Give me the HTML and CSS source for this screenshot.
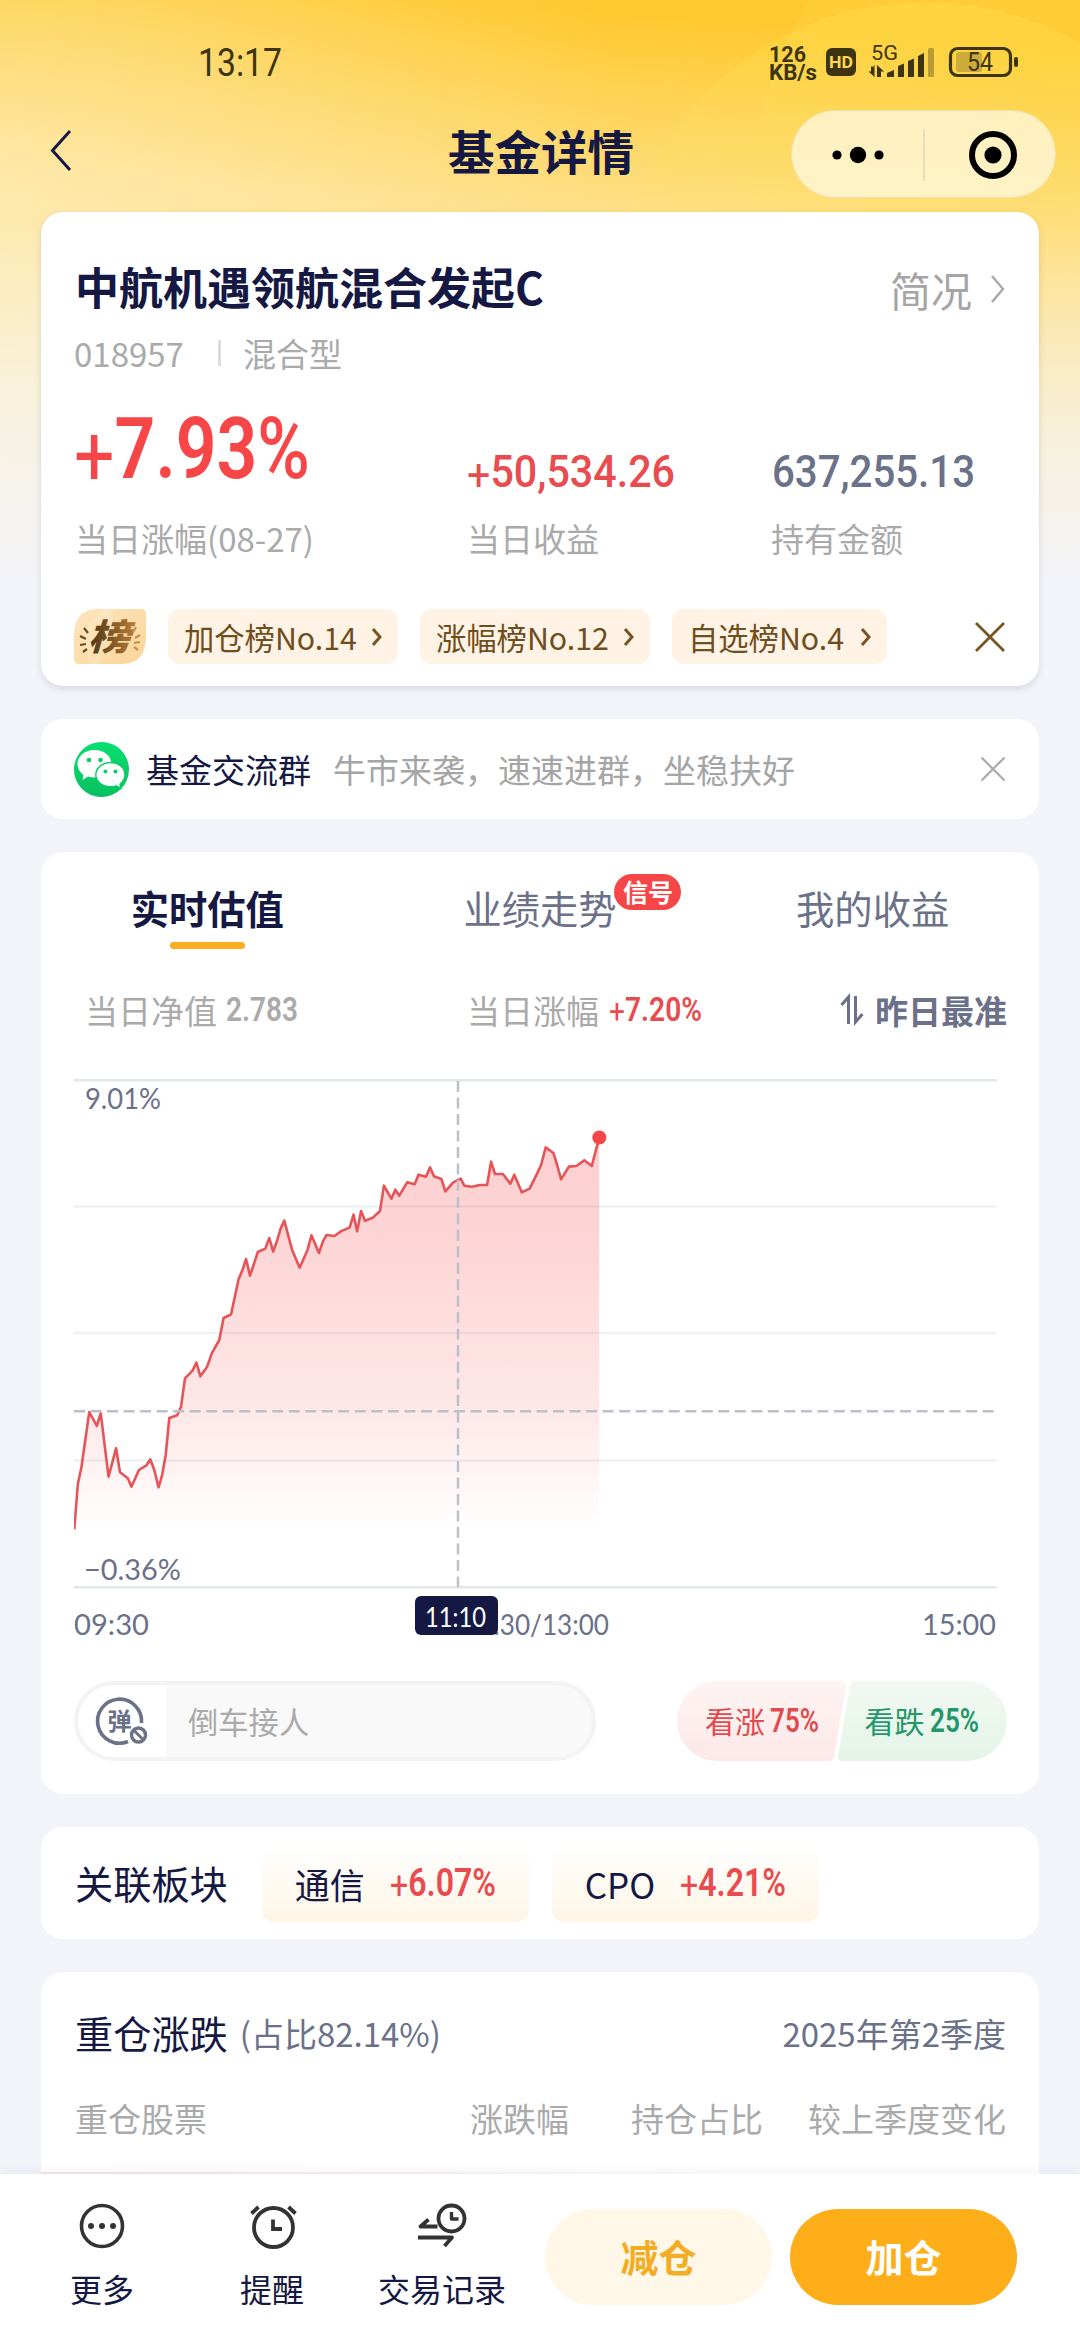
FILE: index.html
```html
<!DOCTYPE html>
<html lang="zh-CN">
<head>
<meta charset="utf-8">
<title>基金详情</title>
<link rel="stylesheet" href="styles.css">
</head>
<body>
<div class="screen">
  <svg class="backdrop" width="1080" height="640" viewBox="0 0 1080 640">
    <defs>
      <linearGradient id="sky" x1="0.35" y1="0" x2="0.25" y2="1">
        <stop offset="0" stop-color="#fec92f"/><stop offset=".3" stop-color="#fedf85"/><stop offset=".6" stop-color="#fdeaae"/><stop offset="1" stop-color="#fbf0cc"/>
      </linearGradient>
      <radialGradient id="glow" gradientUnits="userSpaceOnUse" cx="0" cy="180" r="620">
        <stop offset="0" stop-color="#fff" stop-opacity=".3"/><stop offset="1" stop-color="#fff" stop-opacity="0"/>
      </radialGradient>
      <linearGradient id="orb" x1="0" y1="0" x2="0" y2="1">
        <stop offset="0" stop-color="#ffe45c" stop-opacity=".26"/><stop offset=".6" stop-color="#ffe45c" stop-opacity="0"/>
      </linearGradient>
      <linearGradient id="fade" x1="0" y1="0" x2="0" y2="1">
        <stop offset=".35" stop-color="#f3f4fa" stop-opacity="0"/><stop offset=".93" stop-color="#f3f4fa"/>
      </linearGradient>
    </defs>
    <rect width="1080" height="640" fill="url(#sky)"/>
    <rect width="1080" height="640" fill="url(#glow)"/>
    <circle cx="1150" cy="210" r="400" fill="url(#orb)"/>
    <circle cx="925" cy="312" r="310" fill="url(#orb)"/>
    <rect width="1080" height="640" fill="url(#fade)"/>
  </svg>

  <header class="statusbar">
    <svg class="ico" width="83" height="27"><text class="clock" x="-1" y="27" textLength="84" lengthAdjust="spacingAndGlyphs">13:17</text></svg>
    <svg class="ico" width="250" height="38" viewBox="768 44 250 38">
      <g fill="#3d3512">
        <text class="speed" x="769" y="62" textLength="37" lengthAdjust="spacingAndGlyphs">126</text>
        <text class="speed" x="769" y="80" textLength="48" lengthAdjust="spacingAndGlyphs">KB/s</text>
        <rect x="826" y="48" width="30" height="28" rx="6"/>
        <text class="hd" x="829" y="68" textLength="24" lengthAdjust="spacingAndGlyphs">HD</text>
        <text class="net" x="871" y="60" textLength="27" lengthAdjust="spacingAndGlyphs">5G</text>
        <path d="M871 66.500h3v-1.500l.5 0v12l-6-5.500h2.500zM877 65l7 6.500h-3v5.500h-4z"/>
        <path d="M887 77v-4l7-3v7zM898 77v-11l6-2.500v13.500zM908 77v-16l6-2.500v18.500zM918 77v-21l6-3v24z"/>
        <rect x="928" y="48" width="6" height="29" rx="1.500" opacity=".35"/>
        <rect x="956" y="52" width="26" height="20" rx="3" opacity=".25"/>
        <rect x="950.500" y="48.500" width="60" height="27" rx="7" fill="none" stroke="#3d3512" stroke-width="3.200"/>
        <rect x="1014" y="57" width="4" height="10" rx="2"/>
        <text class="batt" x="967" y="71" textLength="26" lengthAdjust="spacingAndGlyphs">54</text>
      </g>
    </svg>
  </header>

  <nav class="titlebar">
    <svg class="ico back" width="24" height="44"><path d="M20 2 2.500 21.500 20 41" fill="none" stroke="#151843" stroke-width="3"/></svg>
    <h1>基金详情</h1>
    <div class="capsule">
      <svg class="ico" width="264" height="86"><g fill="#000"><circle cx="45" cy="44" r="4.600"/><circle cx="66" cy="44" r="8.200"/><circle cx="87" cy="44" r="4.600"/><circle cx="201" cy="44" r="8.600"/></g><path d="M132 18v52" stroke="#e0d8b4" stroke-width="1.500"/><circle cx="201" cy="44" r="21" fill="none" stroke="#000" stroke-width="6"/></svg>
    </div>
  </nav>

  <main>
    <section class="card fund">
      <div class="fund-head">
        <h2>中航机遇领航混合发起C</h2>
        <span class="brief">简况<svg class="ico" width="16" height="30"><path d="m2 2 11 13L2 28" fill="none" stroke="#aaa" stroke-width="2.500"/></svg></span>
      </div>
      <div class="fund-code"><span>018957</span><i></i><span>混合型</span></div>
      <div class="stats">
        <div class="stat"><svg class="ico" width="236" height="62"><text class="din big" x="-1" y="61" textLength="236" lengthAdjust="spacingAndGlyphs"><tspan class="plus" dy="7">+</tspan><tspan dy="-7">7.93</tspan><tspan class="sign">%</tspan></text></svg><span>当日涨幅(08-27)</span></div>
        <div class="stat"><svg class="ico" width="207" height="33"><text class="din mid red" x="0" y="32" textLength="208" lengthAdjust="spacingAndGlyphs"><tspan class="plus" dy="3">+</tspan><tspan dy="-3">50,534.26</tspan></text></svg><span>当日收益</span></div>
        <div class="stat"><svg class="ico" width="203" height="33"><text class="din mid slate" x="1" y="32" textLength="203" lengthAdjust="spacingAndGlyphs">637,255.13</text></svg><span>持有金额</span></div>
      </div>
      <div class="ranks">
        <svg class="ico" width="72" height="55" viewBox="0 0 72 55">
          <defs><linearGradient id="gold" x1="0" y1="0" x2="1" y2="1"><stop offset="0" stop-color="#fde5bd"/><stop offset="1" stop-color="#fbd59a"/></linearGradient>
          <linearGradient id="ink" x1="0" y1="0" x2="1" y2="0"><stop offset="0" stop-color="#4a3416"/><stop offset="1" stop-color="#bb7c35"/></linearGradient></defs>
          <path d="M24 0h43q5 0 5 5v22q0 28-24 28H5q-5 0-5-5V27Q0 0 24 0z" fill="url(#gold)"/>
          <path d="M32 0h5q9 28-14 55h-7Q-2 20 32 0z" fill="#fff" opacity=".15"/>
          <text class="crest" x="14" y="41" textLength="42" lengthAdjust="spacingAndGlyphs" fill="url(#ink)">榜</text>
          <path d="m10 19 4 5M6 27l6 3M6 36l6-1M9 43l4-3" stroke="#6b4a1e" stroke-width="2.200"/>
          <path d="m62 18-3 5M66 26l-5 3M66 33l-6 1M64 41l-4-3" stroke="#c88f4c" stroke-width="2.200"/>
        </svg>
        <span class="rank">加仓榜No.14<svg class="ico" width="12" height="20"><path d="m2 2 7 8-7 8" fill="none" stroke="#7a5523" stroke-width="3"/></svg></span>
        <span class="rank">涨幅榜No.12<svg class="ico" width="12" height="20"><path d="m2 2 7 8-7 8" fill="none" stroke="#7a5523" stroke-width="3"/></svg></span>
        <span class="rank short">自选榜No.4<svg class="ico" width="12" height="20"><path d="m2 2 7 8-7 8" fill="none" stroke="#7a5523" stroke-width="3"/></svg></span>
        <svg class="ico end" width="32" height="32"><path d="m2 2 28 28M30 2 2 30" stroke="#7a5523" stroke-width="2.800"/></svg>
      </div>
    </section>

    <section class="card group">
      <svg class="ico" width="55" height="55" viewBox="0 0 55 55">
        <defs><linearGradient id="wx" x1="0" y1="0" x2="0" y2="1"><stop offset="0" stop-color="#07e070"/><stop offset="1" stop-color="#08bf5f"/></linearGradient></defs>
        <circle cx="27.500" cy="27.500" r="27.500" fill="url(#wx)"/>
        <path d="M20.500 8C11 8 3.500 14 3.500 22c0 4.500 2.500 8.500 6 11l-1 5 5.500-3.500c2 .7 4.300 1 6.500 1 9.500 0 17-6 17-13.700S30 8 20.500 8z" fill="#fff"/>
        <path d="M36.500 20.500c8 0 14.500 5.200 14.500 12.300 0 3.800-2 7-5 9.200l.8 4.500-4.500-2.700c-1.800.6-3.800 1-5.800 1-8 0-14.700-5.200-14.700-12s6.700-12.300 14.700-12.300z" fill="#fff" stroke="#09cc65" stroke-width="1.400"/>
        <g fill="#09cc65"><circle cx="15" cy="18" r="2.300"/><circle cx="26.500" cy="18" r="2.300"/><circle cx="31.500" cy="29.500" r="2"/><circle cx="41.500" cy="29.500" r="2"/></g>
      </svg>
      <strong>基金交流群</strong><span>牛市来袭，速速进群，坐稳扶好</span>
      <svg class="ico end" width="26" height="26"><path d="m1.500 1.500 23 23M24.500 1.500l-23 23" stroke="#aaa" stroke-width="2.200"/></svg>
    </section>

    <section class="card trend">
      <div class="tabs">
        <div class="tab active">实时估值</div>
        <div class="tab"><span class="tab-name">业绩走势<b>信号</b></span></div>
        <div class="tab">我的收益</div>
      </div>
      <div class="metrics">
        <div class="metric"><span>当日净值</span><svg class="ico" width="71" height="25"><text class="din small grey" x="-1" y="23" textLength="72" lengthAdjust="spacingAndGlyphs">2.783</text></svg></div>
        <div class="metric"><span>当日涨幅</span><svg class="ico" width="92" height="25"><text class="din small red" x="0" y="23" textLength="93" lengthAdjust="spacingAndGlyphs"><tspan class="plus" dy="2">+</tspan><tspan dy="-2">7.20%</tspan></text></svg></div>
        <div class="metric sort"><svg class="ico" width="24" height="30"><path d="M1.500 10 8.500 2v27M15.500 1v26l7-8" fill="none" stroke="#6b7189" stroke-width="3"/></svg><b>昨日最准</b></div>
      </div>
      <svg class="chart" width="932" height="570" viewBox="74 1079 932 570">
        <defs><linearGradient id="area" x1="0" y1="0" x2="0" y2="1">
          <stop offset="0" stop-color="#f74648" stop-opacity=".26"/><stop offset=".3" stop-color="#f74648" stop-opacity=".22"/><stop offset=".7" stop-color="#f74648" stop-opacity=".125"/><stop offset="1" stop-color="#f74648" stop-opacity="0"/>
        </linearGradient></defs>
        <g stroke="#eef2f5" stroke-width="2.500"><path d="M74 1206.500h923M74 1333h923M74 1460.500h923"/></g>
        <g stroke="#e2e7ea" stroke-width="2.500"><path d="M74 1080.200h923M74 1587.200h923"/></g>
        <g transform="translate(60 1060) scale(.35714 .33333)">
          <path fill="url(#area)" d="M40 1408 50 1272 60 1222 82 1056 103 1098 114 1060 136 1250 157 1165 168 1237 190 1255 200 1280 221 1230 242 1216 253 1198 264 1230 276 1282 286 1245 296 1185 306 1074 328 1066 339 1040 350 955 371 932 382 908 393 949 412 920 425 880 446 840 458 774 479 763 500 658 511 630 521 597 532 647 554 576 575 566 586 534 597 575 607 545 618 505 628 482 650 570 671 623 693 570 704 526 725 579 736 545 746 525 768 528 790 512 811 503 822 464 832 514 843 453 854 482 876 473 896 453 907 377 928 416 939 389 950 407 972 367 993 373 1004 344 1025 350 1036 322 1047 349 1068 357 1079 394 1101 367 1122 356 1132 377 1154 380 1175 375 1196 375 1207 305 1218 342 1240 342 1261 371 1272 344 1293 397 1315 386 1336 340 1347 315 1360 262 1382 280 1392 315 1403 358 1425 320 1446 318 1468 301 1489 318 1510 232V1408z"/>
          <path fill="none" stroke="#e65457" stroke-width="2.600" stroke-linejoin="round" vector-effect="non-scaling-stroke" d="M40 1408 50 1272 60 1222 82 1056 103 1098 114 1060 136 1250 157 1165 168 1237 190 1255 200 1280 221 1230 242 1216 253 1198 264 1230 276 1282 286 1245 296 1185 306 1074 328 1066 339 1040 350 955 371 932 382 908 393 949 412 920 425 880 446 840 458 774 479 763 500 658 511 630 521 597 532 647 554 576 575 566 586 534 597 575 607 545 618 505 628 482 650 570 671 623 693 570 704 526 725 579 736 545 746 525 768 528 790 512 811 503 822 464 832 514 843 453 854 482 876 473 896 453 907 377 928 416 939 389 950 407 972 367 993 373 1004 344 1025 350 1036 322 1047 349 1068 357 1079 394 1101 367 1122 356 1132 377 1154 380 1175 375 1196 375 1207 305 1218 342 1240 342 1261 371 1272 344 1293 397 1315 386 1336 340 1347 315 1360 262 1382 280 1392 315 1403 358 1425 320 1446 318 1468 301 1489 318 1510 232"/>
        </g>
        <path d="M74 1411.200h923M458 1081v506" fill="none" stroke="#bcc0c9" stroke-width="2.500" stroke-dasharray="11 5.520"/>
        <circle cx="599.300" cy="1137.500" r="7" fill="#f74648"/>
        <g class="axis">
          <text x="85" y="1109" textLength="76" lengthAdjust="spacingAndGlyphs">9.01%</text>
          <text x="84" y="1580" textLength="97" lengthAdjust="spacingAndGlyphs">−0.36%</text>
          <text x="74" y="1635" textLength="75" lengthAdjust="spacingAndGlyphs">09:30</text>
          <text x="463" y="1635" textLength="146" lengthAdjust="spacingAndGlyphs">11:30/13:00</text>
          <text x="922" y="1635" textLength="74" lengthAdjust="spacingAndGlyphs">15:00</text>
        </g>
        <rect x="415" y="1596" width="83" height="39" rx="6" fill="#151843"/>
        <text class="cursor" x="425" y="1627" textLength="61" lengthAdjust="spacingAndGlyphs">11:10</text>
      </svg>
      <div class="actions">
        <div class="danmu">
          <div class="danmu-toggle">
            <svg class="ico" width="52" height="48" viewBox="96 1696 52 48"><path d="M128 1740.500A22 22 0 1 1 141.500 1722" fill="none" stroke="#6b7189" stroke-width="3.600"/><text class="danmu-char" x="107.500" y="1728.500">弹</text><circle cx="138.500" cy="1734" r="7" fill="#fff" stroke="#6b7189" stroke-width="3.400"/><path d="m134 1729.500 9 9" stroke="#6b7189" stroke-width="3"/></svg>
          </div>
          <span>倒车接人</span>
        </div>
        <svg class="ico" width="330" height="80" viewBox="676 1681 330 80">
          <defs><linearGradient id="up" x1="0" y1="0" x2="0" y2="1"><stop offset="0" stop-color="#fef4f3"/><stop offset="1" stop-color="#fce8e8"/></linearGradient>
          <linearGradient id="down" x1="0" y1="0" x2="0" y2="1"><stop offset="0" stop-color="#f1f9f2"/><stop offset="1" stop-color="#e5f4e8"/></linearGradient></defs>
          <path d="M716 1681h125q4.500 0 4 5l-12 70q-1 5-5 5H716a40 40 0 0 1 0-80z" fill="url(#up)"/>
          <path d="M855 1681h111a40 40 0 0 1 0 80H841q-5 0-4-5l12-70q1-5 6-5z" fill="url(#down)"/>
          <g fill="#e04c4e"><text class="vote" x="704" y="1732.500">看涨</text><text class="din vote-num" x="769" y="1732" textLength="49" lengthAdjust="spacingAndGlyphs">75%</text></g>
          <g fill="#23976a"><text class="vote" x="863.500" y="1732.500">看跌</text><text class="din vote-num" x="929" y="1732" textLength="49" lengthAdjust="spacingAndGlyphs">25%</text></g>
        </svg>
      </div>
    </section>

    <section class="card sectors">
      <h3>关联板块</h3>
      <div class="sector"><span>通信</span><svg class="ico" width="106" height="29"><text class="din pct red" x="1" y="27" textLength="106" lengthAdjust="spacingAndGlyphs"><tspan class="plus" dy="3">+</tspan><tspan dy="-3">6.07%</tspan></text></svg></div>
      <div class="sector"><span>CPO</span><svg class="ico" width="106" height="29"><text class="din pct red" x="1" y="27" textLength="106" lengthAdjust="spacingAndGlyphs"><tspan class="plus" dy="3">+</tspan><tspan dy="-3">4.21%</tspan></text></svg></div>
    </section>

    <section class="card holdings">
      <div class="holdings-head"><h3>重仓涨跌</h3><span>(占比82.14%)</span><span class="quarter">2025年第2季度</span></div>
      <div class="cols"><span>重仓股票</span><span>涨跌幅</span><span>持仓占比</span><span>较上季度变化</span></div>
      <div class="first-row"></div>
    </section>
  </main>

  <footer class="toolbar">
    <div class="tool"><svg class="ico" width="50" height="48"><circle cx="25" cy="24" r="20.500" fill="none" stroke="#333" stroke-width="3.600"/><g fill="#333"><circle cx="14" cy="24" r="3"/><circle cx="25" cy="24" r="3"/><circle cx="36" cy="24" r="3"/></g></svg><span>更多</span></div>
    <div class="tool"><svg class="ico" width="50" height="48" fill="none" stroke="#333" stroke-width="3.800"><circle cx="26.500" cy="25.500" r="19.500"/><path d="M26 17.500v9.500h9M4.500 11.500l7-6.500M48.500 11.500l-7-6.500"/></svg><span>提醒</span></div>
    <div class="tool wide"><svg class="ico" width="50" height="48" fill="none" stroke="#333" stroke-width="3.800" stroke-linejoin="round"><circle cx="34.500" cy="16.500" r="13"/><path d="M34.500 10v7h7" stroke-width="3.400"/><path d="M20.500 24.500h-17l8-7M1 35.500h34l-7.500 8.500"/></svg><span>交易记录</span></div>
    <button class="sell">减仓</button>
    <button class="buy">加仓</button>
  </footer>
</div>
</body>
</html>
```
FILE: styles.css
```css
* { box-sizing: border-box; }
body { margin: 0; background: #f3f4fa; font-family: "Noto Sans CJK SC", "Noto Sans", sans-serif; color: #151843; }
h1, h2, h3 { margin: 0; font-weight: 400; }
.ico { display: block; flex: none; overflow: visible; }
.end { margin-left: auto; }

.screen { position: relative; display: flex; flex-direction: column; width: 1080px; height: 2340px; overflow: hidden; }
.screen > * { flex: none; }
.backdrop { position: absolute; top: 0; left: 0; }

.statusbar { position: relative; display: flex; justify-content: space-between; align-items: flex-start; height: 110px; padding: 44px 62px 0 199px; }
.statusbar .ico:first-child { margin-top: 5px; }
.clock { font: 400 38px Roboto, sans-serif; fill: #3d3512; }
.speed { font: 700 22px Roboto, sans-serif; }
.hd { font: 700 17px Roboto, sans-serif; fill: #ffd750; }
.net { font: 400 21px Roboto, sans-serif; }
.batt { font: 400 25px Roboto, sans-serif; }

.titlebar { position: relative; display: grid; grid-template-columns: 289px 1fr 265px; align-items: center; height: 102px; padding: 0 24px 14px 0; }
.titlebar .back { margin: -6px 0 0 50px; }
.titlebar h1 { text-align: center; font-size: 46.5px; line-height: 80px; font-weight: 700; margin-top: -8px; padding-left: 2px; }
.capsule { height: 88px; border: 1px solid #efe2ac; border-radius: 44px; background: rgba(255, 249, 224, .76); }

main { position: relative; display: flex; flex-direction: column; gap: 33px; padding: 0 41px; }
.card { padding: 0 33px; border-radius: 22px; background: #fff; }

.fund { height: 474px; padding-top: 46px; box-shadow: 0 3px 7px rgba(40, 45, 80, .14); }
.fund-head { display: flex; justify-content: space-between; align-items: center; height: 62px; padding-left: 1px; }
.fund-head h2 { font-size: 44px; line-height: 62px; font-weight: 700; margin-top: -6px; }
.brief { display: flex; align-items: center; gap: 18px; font-size: 41px; line-height: 60px; color: #a5a5a5; }
.fund-code { display: flex; align-items: center; height: 48px; margin-top: 9px; font-size: 33px; line-height: 48px; color: #aaa; }
.fund-code i { width: 3px; height: 26px; margin: 0 22px 0 34px; background: #ddd; }
.stats { display: grid; grid-template-columns: 392px 304px 1fr; margin-top: 40px; padding-left: 1px; height: 150px; }
.stat { display: flex; flex-direction: column; justify-content: flex-end; gap: 26px; font-size: 33px; line-height: 48px; color: #aaa; padding-bottom: 9px; }
.stat:first-child { gap: 35px; }
.din { font-family: Roboto, "DejaVu Sans", sans-serif; font-weight: 500; }
.plus { font-weight: 400; }
.sign { font-weight: 500; }
.big { font-size: 86px; font-weight: 600; fill: #f74648; }
.mid { font-size: 45px; }
.small { font-size: 34px; font-weight: 600; }
.pct { font-size: 39.500px; font-weight: 600; }
.red { fill: #e84c4f; }
.slate { fill: #6b7189; }
.grey { fill: #aaa; }
.ranks { display: flex; align-items: center; height: 55px; margin-top: 42px; gap: 22px; }
.rank { display: flex; align-items: center; justify-content: space-between; width: 230px; height: 55px; padding: 0 15px 0 16px; border-radius: 12px; background: #fff3e6; font-size: 30.300px; color: #704d1c; white-space: nowrap; }
.rank.short { width: 215px; }
.crest { font: italic 900 36px "Noto Sans CJK SC", sans-serif; }

.group { display: flex; align-items: center; height: 100px; font-size: 33px; }
.group strong { margin: 0 22px 0 17px; font-weight: 400; }
.group span { color: #a5a5a5; }

.trend { height: 942px; padding-right: 32px; }
.tabs { display: grid; grid-template-columns: repeat(3, 1fr); height: 98px; margin: 0 -32px 0 -33px; padding-top: 28px; }
.tab { display: flex; flex-direction: column; align-items: center; font-size: 38.300px; line-height: 56px; color: #6b7189; }
.tab.active { font-weight: 700; color: #151843; }
.tab.active::after { content: ""; width: 75px; height: 7px; margin-top: 6px; border-radius: 4px; background: #f8ae20; }
.tab-name { position: relative; }
.tab-name b { position: absolute; left: 151px; top: -6px; width: 67px; height: 36px; border-radius: 18px; background: #f74648; color: #fff; font-size: 25px; line-height: 35px; text-align: center; }
.metrics { display: grid; grid-template-columns: 382px 1fr auto; align-items: center; height: 48px; margin-top: 36px; padding-left: 11px; font-size: 33px; color: #aaa; }
.metric { display: flex; align-items: center; gap: 10px; line-height: 48px; }
.sort { gap: 11px; color: #6b7189; }
.chart { display: block; margin-top: 45px; }
.axis { font: 400 28px Lato, sans-serif; fill: #6b7189; }
.cursor { font: 400 27px Lato, sans-serif; fill: #fff; }
.actions { display: flex; justify-content: space-between; margin-top: 32px; }
.danmu { display: flex; align-items: center; width: 522px; height: 80px; border: 4px solid #f3f3f3; border-radius: 40px; overflow: hidden; background: #f9f9f9; font-size: 30.300px; color: #aaa; }
.danmu-toggle { display: flex; align-items: center; width: 88px; height: 72px; margin-right: 22px; padding-left: 18px; background: #fff; }
.danmu-char { font: 700 24px "Noto Sans CJK SC", sans-serif; fill: #6b7189; }
.vote { font-size: 30px; }
.vote-num { font-size: 34px; font-weight: 600; }

.sectors { display: flex; align-items: center; height: 112px; padding-left: 34px; }
h3 { font-size: 38.200px; line-height: 56px; }
.sector { display: flex; align-items: center; justify-content: space-between; width: 267px; height: 77px; margin-left: 23px; padding: 0 34px 0 33px; border-radius: 12px; background: linear-gradient(#fff, #fef5e6); font-size: 35px; }
h3 + .sector { margin-left: 34px; }

.holdings { height: 400px; padding: 33px 33px 0 34px; }
.holdings-head { display: flex; align-items: center; height: 56px; font-size: 33px; color: #6b7189; }
.holdings-head h3 { margin-right: 12px; color: #151843; }
.quarter { margin-left: auto; }
.cols { display: grid; grid-template-columns: 1fr 98px 195px 243px; margin-top: 33px; font-size: 33px; line-height: 48px; color: #aaa; text-align: right; white-space: nowrap; }
.cols span:first-child { text-align: left; }
.first-row { height: 60px; margin: 30px -33px 0 -34px; background: linear-gradient(90deg, #fbe3e1, #fff 70%); }

.toolbar { position: absolute; left: 0; bottom: 0; display: flex; width: 1080px; height: 166px; padding: 28px 63px 0 32px; background: #fff; box-shadow: 0 -3px 12px rgba(40, 45, 80, .06); }
.tool { display: flex; flex-direction: column; align-items: center; width: 140px; margin-right: 30px; font-size: 32px; line-height: 46px; gap: 15px; }
.tool.wide { margin-right: 33px; }
.toolbar button { width: 227px; height: 96px; margin: 7px 18px 0 0; padding: 0 0 3px; border: 0; border-radius: 48px; font: 700 38px "Noto Sans CJK SC", sans-serif; flex: none; }
.toolbar .buy { margin-right: 0; background: #fdae18; color: #fff; }
.toolbar .sell { background: #fff7e8; color: #f3ad24; }
```
